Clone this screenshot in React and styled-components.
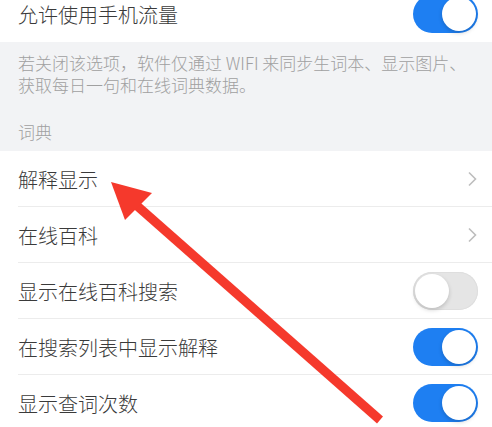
import React, { useState } from "react";
import styled, { createGlobalStyle } from "styled-components";

const GlobalStyle = createGlobalStyle`
  body {
    margin: 0;
    background: #ffffff;
    font-family: "Noto Sans CJK SC", "Noto Sans", sans-serif;
    overflow: hidden;
  }
`;

const Page = styled.div`
  position: relative;
  width: 492px;
  height: 427px;
  overflow: hidden;
`;

const Group = styled.div`
  background: #ffffff;
  margin-top: ${(p) => p.$offset || 0}px;
`;

const Row = styled.div`
  display: flex;
  align-items: center;
  height: 56px;
  padding: 0 14px 0 18px;
  box-sizing: border-box;
  color: #3a3a3a;
  font-size: 20px;
  font-weight: 300;
  position: relative;

  &::after {
    content: "";
    display: ${(p) => (p.$last ? "none" : "block")};
    position: absolute;
    left: 18px;
    right: 0;
    bottom: 0;
    height: 1px;
    background: #ececec;
  }
`;

const Label = styled.span`
  flex: 1;
`;

const Gray = styled.div`
  background: #f2f3f5;
  padding: 10px 18px 8px;
  color: #a0a0a0;
  font-size: 17px;
  font-weight: 300;
  line-height: 22px;
`;

const Note = styled.p`
  margin: 0;
  line-height: 22px;
  height: 22px;
  white-space: nowrap;
`;

const Header = styled.div`
  margin-top: 25px;
`;

const Track = styled.button`
  position: relative;
  width: 65px;
  height: 38px;
  padding: 0;
  border-radius: 19px;
  border: none;
  cursor: pointer;
  background: ${(p) => (p.$on ? "#1e7ff2" : "#e5e5e5")};
  box-shadow: ${(p) => (p.$on ? "none" : "inset 0 0 0 1px #dedede")};
`;

const Knob = styled.span`
  position: absolute;
  top: 2px;
  left: ${(p) => (p.$on ? "29px" : "2px")};
  width: 34px;
  height: 34px;
  border-radius: 50%;
  background: #ffffff;
  box-shadow: 0 2px 4px rgba(0, 0, 0, 0.18);
`;

const Overlay = styled.svg`
  position: absolute;
  top: 0;
  left: 0;
  pointer-events: none;
`;

const Toggle = ({ initial }) => {
  const [on, setOn] = useState(initial);
  return (
    <Track $on={on} onClick={() => setOn(!on)}>
      <Knob $on={on} />
    </Track>
  );
};

const Chevron = () => (
  <svg width="12" height="16" viewBox="0 0 12 16">
    <path d="M3 1.5l6.5 6.5L3 14.5" fill="none" stroke="#bdbdbd" strokeWidth="1.6" />
  </svg>
);

const rows = [
  { label: "解释显示", kind: "link" },
  { label: "在线百科", kind: "link" },
  { label: "显示在线百科搜索", kind: "toggle", on: false },
  { label: "在搜索列表中显示解释", kind: "toggle", on: true },
  { label: "显示查词次数", kind: "toggle", on: true },
];

const App = () => {
  return (
    <Page>
      <GlobalStyle />
      <Group $offset={-14}>
        <Row $last>
          <Label>允许使用手机流量</Label>
          <Toggle initial={true} />
        </Row>
      </Group>
      <Gray>
        <Note>若关闭该选项，软件仅通过 WIFI 来同步生词本、显示图片、</Note>
        <Note>获取每日一句和在线词典数据。</Note>
        <Header>词典</Header>
      </Gray>
      <Group>
        {rows.map((r, i) => (
          <Row key={r.label} $last={i === rows.length - 1}>
            <Label>{r.label}</Label>
            {r.kind === "link" ? <Chevron /> : <Toggle initial={r.on} />}
          </Row>
        ))}
      </Group>
      <Overlay width="492" height="427" viewBox="0 0 492 427">
        <line x1="135" y1="204" x2="380" y2="420" stroke="#f5392c" strokeWidth="9" />
        <polygon points="111,182 152,193 125,220" fill="#f5392c" />
      </Overlay>
    </Page>
  );
};

export default App;
